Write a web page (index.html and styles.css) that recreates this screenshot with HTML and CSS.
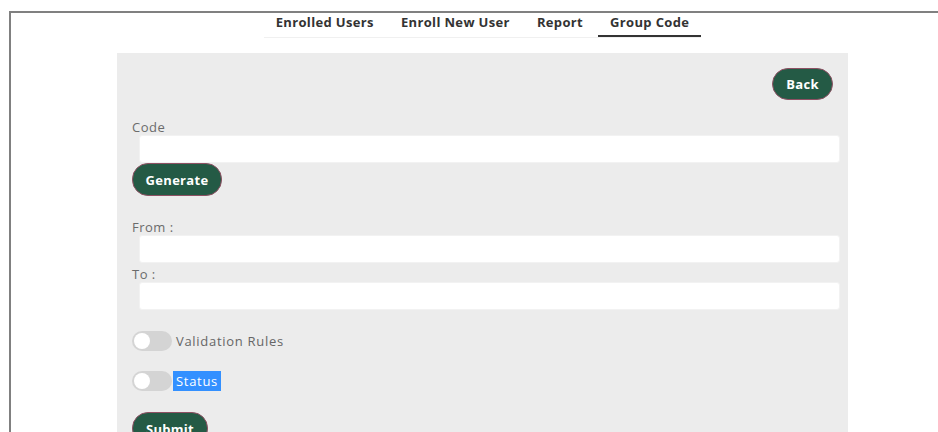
FILE: index.html
```html
<!DOCTYPE html>
<html lang="en">
<head>
<meta charset="utf-8">
<title>Group Code</title>
<link rel="stylesheet" href="styles.css">
</head>
<body>
<div class="frame">
  <nav class="tabs">
    <ul class="tab-list">
      <li class="tab">Enrolled Users</li>
      <li class="tab">Enroll New User</li>
      <li class="tab">Report</li>
      <li class="tab tab-active">Group Code</li>
    </ul>
  </nav>

  <section class="panel">
    <div class="back-row">
      <button class="btn" type="button">Back</button>
    </div>

    <form class="code-form">
      <label class="field-label label-code" for="code">Code</label>
      <input class="field-input" id="code" type="text">
      <button class="btn btn-generate" type="button">Generate</button>

      <label class="field-label label-from" for="from">From :</label>
      <input class="field-input" id="from" type="text">

      <label class="field-label label-to" for="to">To :</label>
      <input class="field-input" id="to" type="text">

      <div class="switch-row switch-first">
        <span class="switch"><span class="knob"></span></span>
        <span class="switch-label">Validation Rules</span>
      </div>
      <div class="switch-row">
        <span class="switch"><span class="knob"></span></span>
        <span class="switch-label selected">Status</span>
      </div>

      <button class="btn btn-submit" type="button">Submit</button>
    </form>
  </section>
</div>
</body>
</html>
```

FILE: styles.css
```css
html, body {
  margin: 0;
  padding: 0;
  background: #ffffff;
  overflow: hidden;
}

body {
  font-family: "Open Sans", "Liberation Sans", sans-serif;
  height: 432px;
}

.frame {
  margin: 11px 0 0 9px;
  width: 943px;
  height: 600px;
  border-top: 2px solid #808080;
  border-left: 2px solid #808080;
}

/* top tab strip */
.tabs {
  display: flex;
  justify-content: center;
}

.tab-list {
  list-style: none;
  margin: 0;
  padding: 0;
  display: flex;
  border-bottom: 1px solid #f0f0f0;
}

.tab {
  font-size: 13px;
  font-weight: 700;
  letter-spacing: 0.35px;
  color: #333333;
  line-height: 18px;
  padding: 0 12px 4px;
  margin-left: 3px;
  border-bottom: 2px solid transparent;
}

.tab:first-child {
  margin-left: 0;
}

.tab-active {
  border-bottom-color: #333333;
}

/* form panel */
.panel {
  margin: 15px auto 0;
  width: 731px;
  height: 420px;
  background: #ececec;
  padding: 15px 8px 0 15px;
  box-sizing: border-box;
}

.back-row {
  display: flex;
  justify-content: flex-end;
  padding-right: 7px;
}

.btn {
  font-family: inherit;
  font-size: 13px;
  font-weight: 700;
  letter-spacing: 0.3px;
  color: #ffffff;
  background: #245a45;
  border: 1px solid #8e5063;
  border-radius: 16px;
  height: 33px;
  padding: 0;
  cursor: pointer;
}

.back-row .btn {
  height: 32px;
  width: 61px;
}

.code-form {
  display: flex;
  flex-direction: column;
  align-items: flex-start;
}

.field-label {
  font-size: 13px;
  letter-spacing: 0.5px;
  color: #6b6b6b;
  line-height: 16px;
}

.label-code { margin-top: 19px; }
.label-from { margin-top: 23px; }
.label-to { margin-top: 3px; }

.field-input {
  box-sizing: border-box;
  align-self: stretch;
  margin-left: 7px;
  height: 28px;
  border: 1px solid #f2f2f2;
  border-radius: 3px;
  background: #ffffff;
  font-family: inherit;
}

.btn-generate {
  width: 90px;
}

.switch-row {
  display: flex;
  align-items: center;
  height: 20px;
  margin-top: 20px;
}

.switch-first {
  margin-top: 21px;
}

.switch {
  display: flex;
  align-items: center;
  width: 40px;
  height: 20px;
  border-radius: 10px;
  background: #d4d4d4;
  padding: 0 2px;
  box-sizing: border-box;
}

.knob {
  width: 16px;
  height: 16px;
  border-radius: 50%;
  background: #ffffff;
}

.switch-label {
  font-size: 13px;
  letter-spacing: 0.7px;
  color: #666666;
  margin-left: 4px;
  line-height: 20px;
}

.selected {
  margin-left: 1px;
  padding: 0 3px;
  background: #3390ff;
  color: #ffffff;
}

.btn-submit {
  margin-top: 21px;
  width: 76px;
}
```
